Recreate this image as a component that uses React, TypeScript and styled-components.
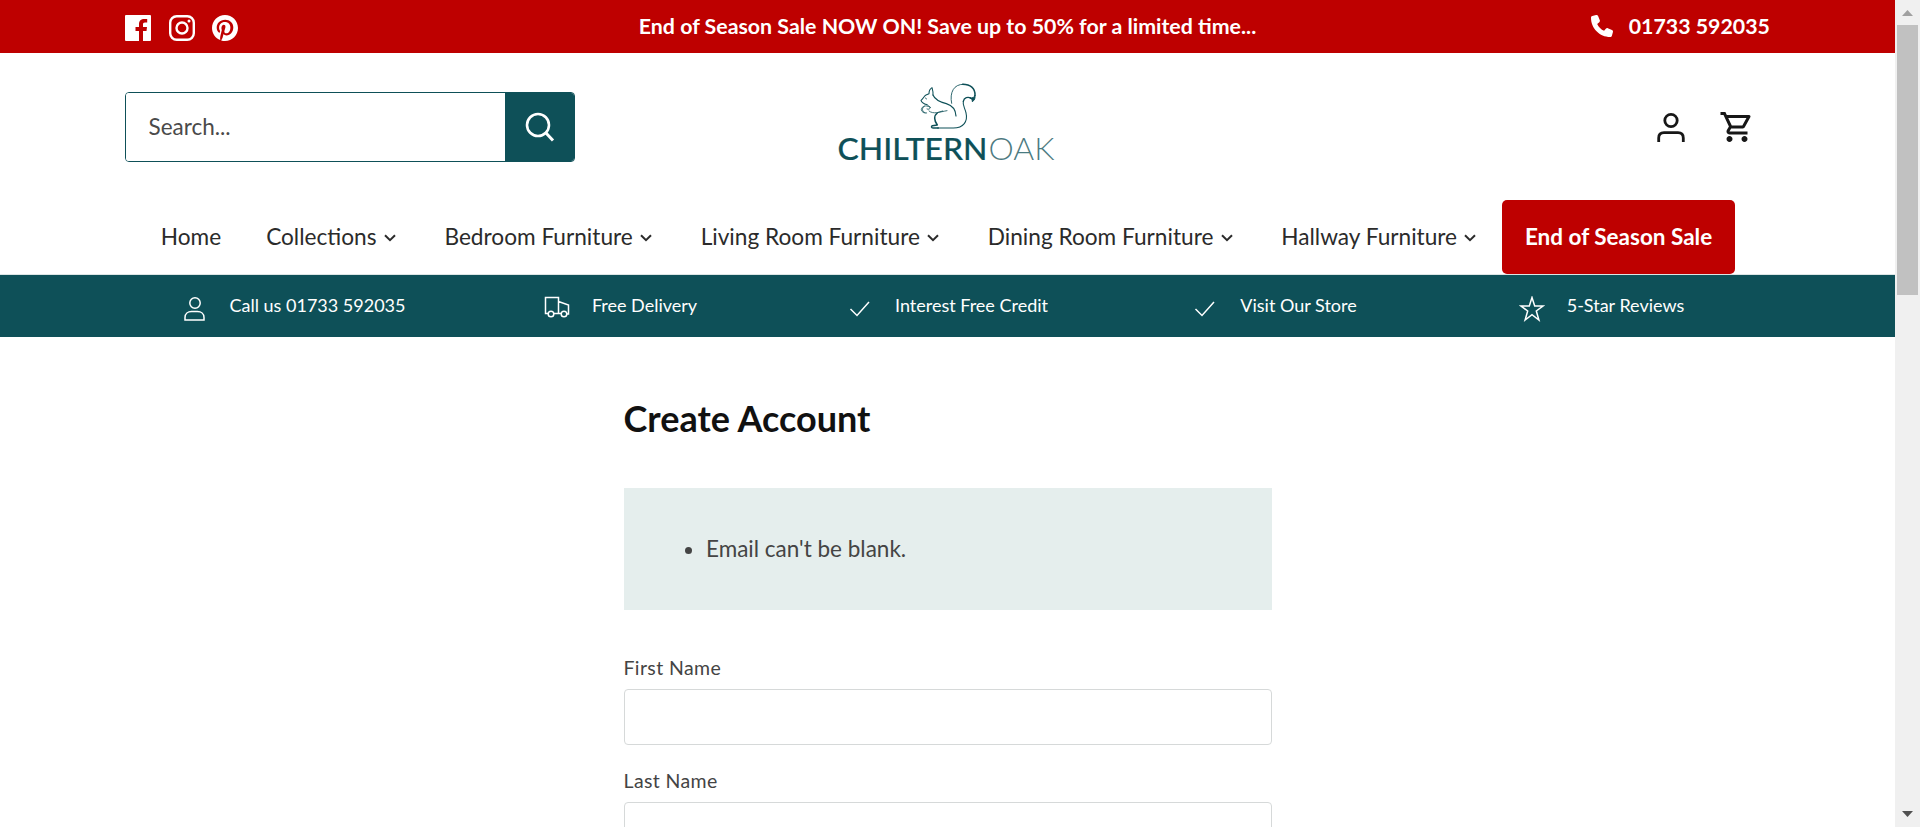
import React from 'react';
import styled, { createGlobalStyle } from 'styled-components';
import { FaPinterest } from 'react-icons/fa';
import { FaPhone } from 'react-icons/fa6';
import { MdOutlineShoppingCart } from 'react-icons/md';

const teal = '#0e5058';
const red = '#be0000';

const GlobalStyle = createGlobalStyle`
  *, *::before, *::after { box-sizing: border-box; }
  body {
    margin: 0;
    overflow: hidden;
    background: #fff;
    color: #444;
    font-family: Lato, "Liberation Sans", sans-serif;
    font-size: 22.5px;
  }
  a { color: inherit; text-decoration: none; }
  svg { display: block; flex: none; }
`;

const Window = styled.div`
  display: flex;
  height: 827px;
  overflow: hidden;
`;

const Page = styled.div`
  flex: 1;
  min-width: 0;
`;

const TopBar = styled.div`
  display: grid;
  grid-template-columns: 1fr auto 1fr;
  align-items: center;
  height: 53px;
  padding: 0 125px 1px;
  background: ${red};
  color: #fff;
  font-size: 21.35px;
  font-weight: 700;
  line-height: 51px;
`;

const Social = styled.div`
  display: flex;
  align-items: center;
  gap: 17.5px;
  padding-top: 4px;
`;

const Phone = styled.a`
  display: flex;
  justify-content: flex-end;
  align-items: center;
  gap: 16px;
`;

const HeaderMain = styled.div`
  display: grid;
  grid-template-columns: 1fr auto 1fr;
  align-items: center;
  height: 147px;
  padding: 0 125px;
`;

const SearchForm = styled.form`
  display: flex;
  width: 450px;
  height: 70px;
  border: 1px solid ${teal};
  border-radius: 4px;
  overflow: hidden;
`;

const SearchInput = styled.input`
  flex: 1;
  min-width: 0;
  padding: 0 22.5px;
  border: 0;
  outline: 0;
  background: #fff;
  font: inherit;
  &::placeholder { color: #4a4a4a; opacity: 1; }
`;

const SearchButton = styled.button`
  display: flex;
  align-items: center;
  justify-content: center;
  width: 69px;
  padding: 0;
  border: 0;
  background: ${teal};
`;

const LogoLink = styled.a`
  display: block;
  margin-bottom: 12px;
`;

const HeaderTools = styled.div`
  display: flex;
  justify-content: flex-end;
  align-items: center;
  gap: 33px;
  padding-right: 15px;
  color: #171717;
`;

const Nav = styled.nav`
  display: flex;
  justify-content: center;
  height: 75px;
  padding-right: 22px;
  border-bottom: 1px solid #dce5e5;
  font-size: 22.65px;
`;

const NavLink = styled.a`
  display: flex;
  align-items: center;
  padding: 0 22.5px 2px;
  color: #2b2b2b;
  white-space: nowrap;
`;

const SaleLink = styled(NavLink)`
  border-radius: 5px;
  background: ${red};
  color: #fff;
  font-size: 22.5px;
  font-weight: 700;
`;

const Chevron = styled.svg`
  width: 12px;
  height: 8px;
  margin: 4px 3.7px 0 7.2px;
`;

const Benefits = styled.div`
  display: grid;
  grid-template-columns: repeat(5, 327px);
  justify-content: center;
  height: 62px;
  background: ${teal};
  color: #fff;
  font-size: 18px;
`;

const Benefit = styled.div`
  display: flex;
  justify-content: center;
  align-items: center;
  gap: 22px;
  height: 60px;
`;

const BenefitIcon = styled.svg`
  width: 26px;
  height: 26px;
  margin-top: 7px;
  fill: none;
  stroke: #fff;
  stroke-width: 1.5;
`;

const Main = styled.main`
  width: 648px;
  margin: 0 auto;
  padding-top: 59px;
`;

const Title = styled.h1`
  margin: 0 0 48px;
  color: #111;
  font-size: 36px;
  font-weight: 700;
  line-height: 44px;
`;

const Errors = styled.ul`
  display: flex;
  flex-direction: column;
  justify-content: center;
  height: 122px;
  margin: 0 0 43px;
  padding: 0 82.5px 2px;
  background: #e5eeed;
  color: #444;
`;

const Field = styled.label`
  display: block;
  height: 113px;
  font-size: 19.5px;
  letter-spacing: 0.38px;
  line-height: 30px;
`;

const TextInput = styled.input`
  display: block;
  width: 100%;
  height: 56px;
  margin-top: 6px;
  border: 1px solid #d6d9d9;
  border-radius: 4px;
  background: #fff;
`;

const ScrollTrack = styled.div`
  display: flex;
  flex-direction: column;
  align-items: center;
  justify-content: space-between;
  width: 25px;
  background: #f0f0f0;
`;

const ScrollThumb = styled.div`
  width: 21px;
  height: 270px;
  margin-bottom: auto;
  background: #c1c1c1;
`;

const ScrollArrow = styled.svg`
  width: 25px;
  height: 25px;
`;

const Logo = () => (
  <svg width="236" height="90" viewBox="0 0 236 90">
    <g transform="translate(80 0) scale(.3333)" fill="none" stroke={teal} strokeLinecap="round" strokeLinejoin="round">
      <path strokeWidth="3.200" d="M51 86C43 84 35 80 33 73C39 69 42 60 48 57L57 53C57 45 61 38 66 35C68 42 70 48 69 57" />
      <path strokeWidth="3.500" d="M69 57C75 72 90 78 109 83C125 88 137 98 138 120" />
      <path strokeWidth="2.400" d="M46 66L50 69M51 86L61 94M59 93C46 86 36 91 34 100C35 109 42 112 50 111M43 91C34 96 36 107 45 110M61 94C60 100 56 101 51 99M57 105C70 116 88 108 111 104M85 109L98 105" />
      <path strokeWidth="4.500" d="M82 111C71 119 72 134 82 147L67 149C63 151 64 156 69 156H85" />
      <path strokeWidth="3.200" d="M83 156H130C161 156 174 136 168 111C165 96 157 88 160 75" />
      <path strokeWidth="4" d="M160 76C162 65 174 61 183 67" />
      <path strokeWidth="3" fill={teal} d="M179 65C185 67 187 72 187 77C194 73 196 66 195 57C193 65 188 67 179 65Z" />
      <path strokeWidth="4.500" d="M195 58C196 36 181 25 158 25" />
      <path strokeWidth="2.600" d="M160 25C132 24 118 49 125 82" />
    </g>
    <g fill={teal} fontFamily="Lato, sans-serif" fontSize="31">
      <text x="7.500" y="83.500" fontWeight="500" stroke={teal} strokeWidth="0.200" textLength="150" lengthAdjust="spacingAndGlyphs">CHILTERN</text>
      <text x="158.500" y="83.500" fontWeight="300" fillOpacity="0.750" textLength="66" lengthAdjust="spacingAndGlyphs">OAK</text>
    </g>
  </svg>
);

const navItems = ['Collections', 'Bedroom Furniture', 'Living Room Furniture', 'Dining Room Furniture', 'Hallway Furniture'];

const tick = <path d="M3.500 13l6.500 6.500L22 6" />;

const benefits = [
  { text: 'Call us 01733 592035', icon: <><circle cx="13" cy="7" r="5.200" /><path d="M3 24v-2.500c0-4 3-6 6.500-6h6c3.500 0 6.500 2 6.500 6V24z" /></> },
  { text: 'Free Delivery', icon: <><path d="M4 17.500H1.500V1.500h13v16H10M14.500 5.500l10 3.500v9H23M14.500 17.500H17" /><circle cx="7" cy="18" r="2.800" /><circle cx="20" cy="18" r="2.800" /></> },
  { text: 'Interest Free Credit', icon: tick },
  { text: 'Visit Our Store', icon: tick },
  { text: '5-Star Reviews', icon: <path d="M13 1.500l2.700 8.500h8.300l-6.700 5 2.600 9-6.900-5.300L6.100 24l2.600-9L2 10h8.300z" /> },
];

export default function App() {
  return (
    <Window>
      <GlobalStyle />
      <Page>
        <TopBar>
          <Social>
            <svg width="26" height="26" viewBox="0 0 26 26" fill="#fff">
              <path d="M1 0H25Q26 0 26 1V25Q26 26 25 26H18V16H21.500L22 12H18V9.500C18 8.300 18.400 7.500 20 7.500H22.200V4.100C21.500 4 20.500 3.900 19.300 3.900C16 3.900 14 5.800 14 9V12H10.500V16H14V26H1Q0 26 0 25V1Q0 0 1 0Z" />
            </svg>
            <svg width="26" height="26" viewBox="0 0 26 26" fill="none" stroke="#fff" strokeWidth="2.400">
              <rect x="1.200" y="1.200" width="23.600" height="23.600" rx="6.500" />
              <circle cx="13" cy="13" r="5.500" />
              <circle cx="20" cy="6" r="1.500" fill="#fff" stroke="none" />
            </svg>
            <FaPinterest size={26} viewBox="0 8 496 496" />
          </Social>
          <span>End of Season Sale NOW ON! Save up to 50% for a limited time...</span>
          <Phone href="#"><FaPhone size={22} />01733 592035</Phone>
        </TopBar>

        <HeaderMain>
          <SearchForm>
            <SearchInput placeholder="Search..." />
            <SearchButton type="button" aria-label="Search">
              <svg width="30" height="30" viewBox="0 0 30 30" fill="none" stroke="#fff" strokeWidth="2.600">
                <circle cx="13" cy="13" r="11" />
                <path d="M20.500 20.500L28 28.500" strokeWidth="3" />
              </svg>
            </SearchButton>
          </SearchForm>
          <LogoLink href="#" aria-label="Chiltern Oak"><Logo /></LogoLink>
          <HeaderTools>
            <svg width="30" height="30" viewBox="0 0 30 30" fill="none" stroke="currentColor" strokeWidth="2.800">
              <circle cx="15" cy="8.500" r="6.200" />
              <path d="M2.700 30v-4c0-3.300 2-5.300 5.300-5.300h14c3.300 0 5.300 2 5.300 5.300v4" />
            </svg>
            <MdOutlineShoppingCart size={36} />
          </HeaderTools>
        </HeaderMain>

        <Nav>
          <NavLink href="#">Home</NavLink>
          {navItems.map((item) => (
            <NavLink href="#" key={item}>
              {item}
              <Chevron viewBox="0 0 12 8" fill="none" stroke="#2b2b2b" strokeWidth="2">
                <path d="M1 1.200L6 6.200L11 1.200" />
              </Chevron>
            </NavLink>
          ))}
          <SaleLink href="#">End of Season Sale</SaleLink>
        </Nav>

        <Benefits>
          {benefits.map((b) => (
            <Benefit key={b.text}>
              <BenefitIcon viewBox="0 0 26 26">{b.icon}</BenefitIcon>
              {b.text}
            </Benefit>
          ))}
        </Benefits>

        <Main>
          <Title>Create Account</Title>
          <Errors><li>Email can't be blank.</li></Errors>
          <Field>First Name<TextInput /></Field>
          <Field>Last Name<TextInput /></Field>
        </Main>
      </Page>

      <ScrollTrack>
        <ScrollArrow viewBox="0 0 25 25"><path d="M7 16h11l-5.500-6z" fill="#a0a0a0" /></ScrollArrow>
        <ScrollThumb />
        <ScrollArrow viewBox="0 0 25 25"><path d="M7 9h11l-5.500 6z" fill="#505050" /></ScrollArrow>
      </ScrollTrack>
    </Window>
  );
}
